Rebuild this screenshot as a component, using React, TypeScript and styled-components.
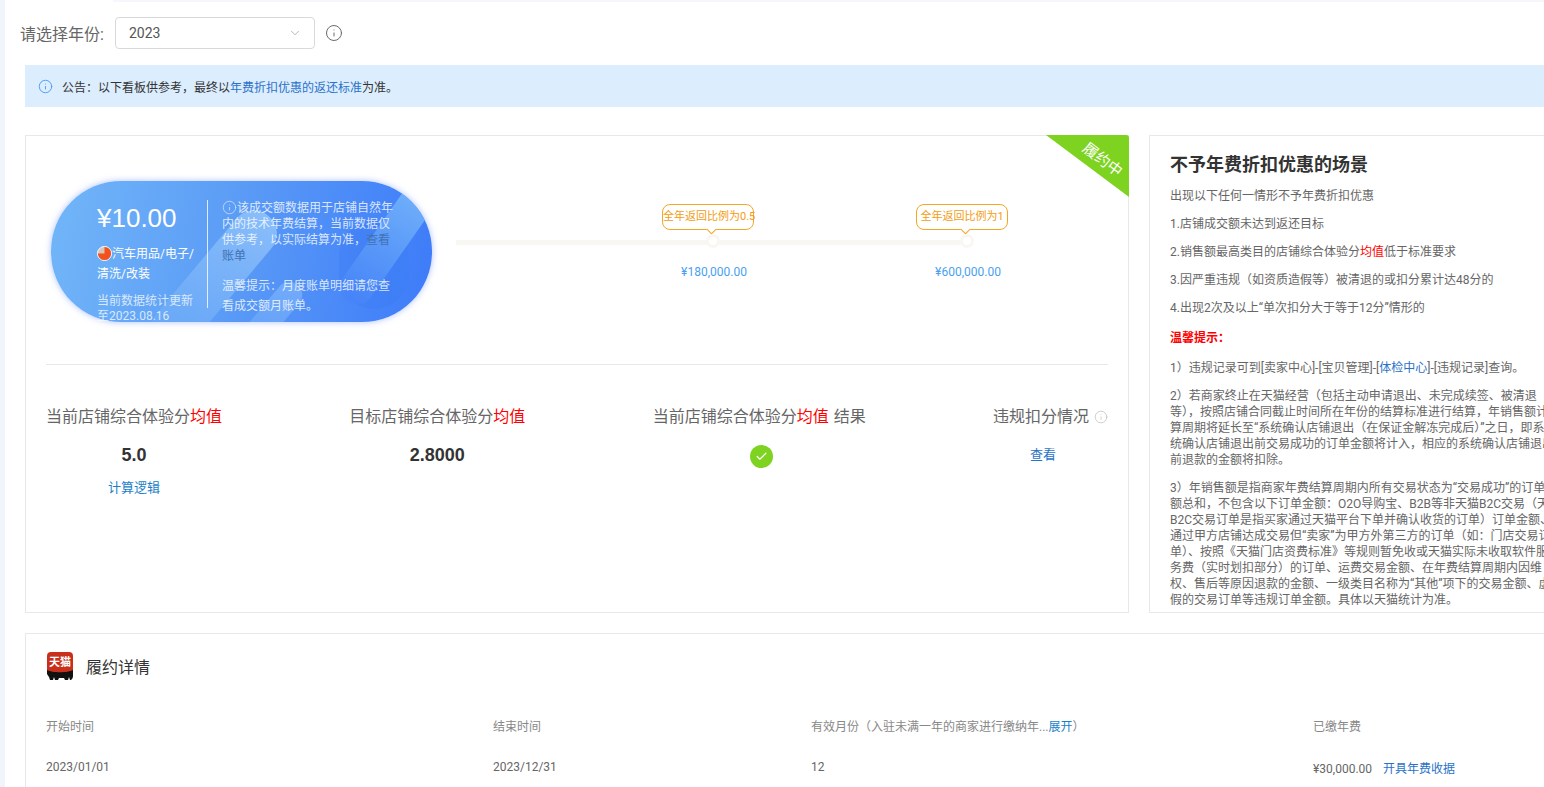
import React from 'react';
import styled, { createGlobalStyle } from 'styled-components';
import { ChevronDown, Info, Check } from 'lucide-react';

const GlobalStyle = createGlobalStyle`
  html, body {
    margin: 0;
    height: 787px;
    overflow: hidden;
    background: #fff;
    font-family: Roboto, "Liberation Sans", "Noto Sans CJK SC", sans-serif;
  }
  * { box-sizing: border-box; }
`;

const rules1 = [
  '若商家终止在天猫经营（包括主动申请退出、未完成续签、被清退',
  '等），按照店铺合同截止时间所在年份的结算标准进行结算，年销售额计',
  '算周期将延长至“系统确认店铺退出（在保证金解冻完成后）”之日，即系',
  '统确认店铺退出前交易成功的订单金额将计入，相应的系统确认店铺退出',
  '前退款的金额将扣除。',
];

const rules2 = [
  '年销售额是指商家年费结算周期内所有交易状态为“交易成功”的订单金',
  '额总和，不包含以下订单金额：O2O导购宝、B2B等非天猫B2C交易（天猫',
  'B2C交易订单是指买家通过天猫平台下单并确认收货的订单）订单金额、',
  '通过甲方店铺达成交易但“卖家”为甲方外第三方的订单（如：门店交易订',
  '单）、按照《天猫门店资费标准》等规则暂免收或天猫实际未收取软件服',
  '务费（实时划扣部分）的订单、运费交易金额、在年费结算周期内因维',
  '权、售后等原因退款的金额、一级类目名称为“其他”项下的交易金额、虚',
  '假的交易订单等违规订单金额。具体以天猫统计为准。',
];

const App = () => {
  return (
    <Shell>
      <GlobalStyle />
      <Rail />
      <Main>
        <TopStrip />
        <Toolbar>
          <ToolbarLabel>请选择年份:</ToolbarLabel>
          <YearSelect>
            2023
            <ChevronDown size={14} strokeWidth={1.2} color="#999" />
          </YearSelect>
          <Info size={18} strokeWidth={1.3} color="#666" />
        </Toolbar>
        <Notice>
          <Info size={15} strokeWidth={1.5} color="#4a9af5" />
          <span>
            公告：以下看板供参考，最终以<NoticeLink>年费折扣优惠的返还标准</NoticeLink>为准。
          </span>
        </Notice>
        <Columns>
          <StatusCard>
            <Ribbon />
            <RibbonText>履约中</RibbonText>
            <TopArea>
              <Pill>
                <PillDecor>
                  <Streak $left={140} $top={15} $w={46} $h={170} $rot={40} $from="rgba(165,210,252,.65)" $to="rgba(130,190,250,.1)" />
                  <Streak $left={195} $top={90} $w={26} $h={120} $rot={40} $from="rgba(165,210,252,.4)" $to="rgba(130,190,250,.05)" />
                  <Blob />
                  <Streak $left={325} $top={-25} $w={34} $h={160} $rot={35} $from="rgba(125,190,250,.95)" $to="rgba(70,130,250,.5)" />
                </PillDecor>
                <PillLeft>
                  <Amount>¥10.00</Amount>
                  <Category>
                    <svg width="15" height="15" viewBox="0 0 16 16" style={{ verticalAlign: '-3px' }}>
                      <circle cx="8" cy="8" r="7.5" fill="#d8c7b4" stroke="#fff" strokeWidth="1" />
                      <path d="M8 8V1a7 7 0 1 1-7 7z" fill="#f4511e" />
                    </svg>
                    汽车用品/电子/清洗/改装
                  </Category>
                  <UpdateNote>当前数据统计更新至2023.08.16</UpdateNote>
                </PillLeft>
                <PillDivider />
                <PillRight>
                  <PillNote>
                    <Info size={15} strokeWidth={1.2} color="#cfe2fb" style={{ verticalAlign: '-3px' }} />
                    该成交额数据用于店铺自然年内的技术年费结算，当前数据仅供参考，以实际结算为准，<DimLink>查看账单</DimLink>
                  </PillNote>
                  <PillTip>温馨提示：月度账单明细请您查看成交额月账单。</PillTip>
                </PillRight>
              </Pill>
              <Slider>
                <Track />
                <Milestone>
                  <Bubble>全年返回比例为0.5</Bubble>
                  <Dot />
                  <MilestoneAmount>¥180,000.00</MilestoneAmount>
                </Milestone>
                <Milestone>
                  <Bubble>全年返回比例为1</Bubble>
                  <Dot />
                  <MilestoneAmount>¥600,000.00</MilestoneAmount>
                </Milestone>
              </Slider>
            </TopArea>
            <Divider />
            <Stats>
              <Stat>
                <StatTitle>当前店铺综合体验分<Red>均值</Red></StatTitle>
                <StatValue>5.0</StatValue>
                <StatLink>计算逻辑</StatLink>
              </Stat>
              <Stat>
                <StatTitle>目标店铺综合体验分<Red>均值</Red></StatTitle>
                <StatValue>2.8000</StatValue>
              </Stat>
              <Stat>
                <StatTitle>当前店铺综合体验分<Red>均值</Red>结果</StatTitle>
                <CheckBadge>
                  <Check size={13} strokeWidth={2.2} color="#fff" />
                </CheckBadge>
              </Stat>
              <Stat>
                <StatTitle>
                  违规扣分情况
                  <Info size={14} strokeWidth={1.2} color="#bbb" />
                </StatTitle>
                <ViewLink>查看</ViewLink>
              </Stat>
            </Stats>
          </StatusCard>
          <RulesCard>
            <RulesTitle>不予年费折扣优惠的场景</RulesTitle>
            <RuleLine>出现以下任何一情形不予年费折扣优惠</RuleLine>
            <RuleLine>1.店铺成交额未达到返还目标</RuleLine>
            <RuleLine>2.销售额最高类目的店铺综合体验分<Red>均值</Red>低于标准要求</RuleLine>
            <RuleLine>3.因严重违规（如资质造假等）被清退的或扣分累计达48分的</RuleLine>
            <RuleLine>4.出现2次及以上“单次扣分大于等于12分”情形的</RuleLine>
            <RuleWarn>温馨提示：</RuleWarn>
            <RuleLine>1）违规记录可到[卖家中心]-[宝贝管理]-[<BlueText>体检中心</BlueText>]-[违规记录]查询。</RuleLine>
            <RuleBlock>
              {rules1.map((line, i) => (
                <div key={i}>{i === 0 ? `2）${line}` : line}</div>
              ))}
            </RuleBlock>
            <RuleBlock>
              {rules2.map((line, i) => (
                <div key={i}>{i === 0 ? `3）${line}` : line}</div>
              ))}
            </RuleBlock>
          </RulesCard>
        </Columns>
        <DetailCard>
          <DetailHead>
            <svg width="28" height="28" viewBox="0 0 28 28">
              <rect x="1" y="0" width="26" height="24" rx="4" fill="#c9301c" />
              <path d="M1 18c5 3 21 3 26 0v6c0 2-1 3-2 4h-1l-1-3-1 3h-3l-1-2-5 0-1 2H9l-1-3-1 3H4l-1-3c-1-1-2-3-2-4z" fill="#111" />
              <text x="14" y="14" textAnchor="middle" fontSize="11" fill="#fff" fontWeight="700">天猫</text>
            </svg>
            <DetailTitle>履约详情</DetailTitle>
          </DetailHead>
          <DetailGrid>
            <DetailLabel>开始时间</DetailLabel>
            <DetailLabel>结束时间</DetailLabel>
            <DetailLabel>
              有效月份（入驻未满一年的商家进行缴纳年...<ExpandLink>展开</ExpandLink>）
            </DetailLabel>
            <DetailLabel>已缴年费</DetailLabel>
            <DetailValue>2023/01/01</DetailValue>
            <DetailValue>2023/12/31</DetailValue>
            <DetailValue>12</DetailValue>
            <DetailValue>
              ¥30,000.00<ReceiptLink>开具年费收据</ReceiptLink>
            </DetailValue>
          </DetailGrid>
        </DetailCard>
      </Main>
    </Shell>
  );
};
export default App;

const Shell = styled.div`
  display: flex;
  width: 1544px;
  height: 787px;
  overflow: hidden;
`;

const Rail = styled.div`
  flex: none;
  width: 5px;
  background: #f2f4fb;
`;

const Main = styled.div`
  flex: none;
  width: 1600px;
  padding-left: 20px;
`;

const TopStrip = styled.div`
  height: 2px;
  margin-left: 88px;
  background: #f7f7fb;
`;

const Toolbar = styled.div`
  display: flex;
  align-items: center;
  height: 32px;
  margin: 15px 0 16px -5px;
  color: #666;
`;

const ToolbarLabel = styled.span`
  width: 95px;
  font-size: 16px;
`;

const YearSelect = styled.div`
  display: flex;
  align-items: center;
  justify-content: space-between;
  width: 200px;
  height: 32px;
  margin-right: 10px;
  padding: 0 12px 0 13px;
  border: 1px solid #d9d9d9;
  border-radius: 4px;
  font-size: 14px;
  color: #555;
`;

const Notice = styled.div`
  display: flex;
  align-items: center;
  gap: 9px;
  height: 42px;
  padding-left: 13px;
  background: #dcedfe;
  font-size: 12px;
  color: #333;
`;

const NoticeLink = styled.span`
  color: #2a72c8;
`;

const Columns = styled.div`
  display: flex;
  gap: 20px;
  margin-top: 28px;
`;

const StatusCard = styled.div`
  position: relative;
  flex: none;
  width: 1104px;
  height: 478px;
  border: 1px solid #e8e8e8;
`;

const Ribbon = styled.div`
  position: absolute;
  top: -1px;
  right: -1px;
  width: 83px;
  height: 62px;
  background: #7ed321;
  border-top-right-radius: 3px;
  clip-path: polygon(0 0, 100% 0, 100% 100%);
`;

const RibbonText = styled.span`
  position: absolute;
  top: 12px;
  right: 2px;
  font-size: 15px;
  color: #fff;
  transform: rotate(37deg);
`;

const TopArea = styled.div`
  display: flex;
  padding: 45px 0 0 25px;
`;

const Pill = styled.div`
  position: relative;
  flex: none;
  display: flex;
  width: 381px;
  height: 141px;
  padding: 19px 0 0 46px;
  border-radius: 70px;
  background: linear-gradient(100deg, #72b6f8 0%, #5c9df6 45%, #3d7bf9 100%);
  box-shadow: 0 0 6px rgba(90, 130, 255, 0.5);
  color: #fff;
`;

const PillDecor = styled.div`
  position: absolute;
  inset: 0;
  overflow: hidden;
  border-radius: 70px;
`;

const Streak = styled.div<{ $left: number; $top: number; $w: number; $h: number; $rot: number; $from: string; $to: string }>`
  position: absolute;
  left: ${(p) => p.$left}px;
  top: ${(p) => p.$top}px;
  width: ${(p) => p.$w}px;
  height: ${(p) => p.$h}px;
  border-radius: ${(p) => p.$w / 2}px;
  background: linear-gradient(${(p) => p.$from}, ${(p) => p.$to});
  transform: rotate(${(p) => p.$rot}deg);
`;

const Blob = styled.div`
  position: absolute;
  left: 288px;
  top: 40px;
  width: 70px;
  height: 88px;
  border-radius: 35px;
  background: rgba(60, 125, 245, 0.45);
`;

const PillLeft = styled.div`
  position: relative;
  flex: none;
  width: 102px;
`;

const Amount = styled.div`
  font-family: "Liberation Sans", sans-serif;
  font-size: 26px;
  line-height: 36px;
`;

const Category = styled.div`
  margin-top: 8px;
  font-size: 12px;
  line-height: 20px;
`;

const UpdateNote = styled.div`
  margin-top: 10px;
  font-size: 12px;
  line-height: 15px;
  color: rgba(255, 255, 255, 0.75);
  word-break: break-all;
`;

const PillDivider = styled.div`
  position: relative;
  flex: none;
  width: 1px;
  height: 108px;
  margin: 0 14px 0 8px;
  background: rgba(255, 255, 255, 0.8);
`;

const PillRight = styled.div`
  position: relative;
  flex: none;
  width: 175px;
  color: rgba(255, 255, 255, 0.8);
  font-size: 12px;
`;

const PillNote = styled.div`
  line-height: 16px;
`;

const DimLink = styled.span`
  color: #4272b4;
`;

const PillTip = styled.div`
  margin-top: 12px;
  line-height: 20px;
`;

const Slider = styled.div`
  position: relative;
  display: flex;
  width: 512px;
  height: 110px;
  margin: 23px 0 0 24px;
  padding-left: 3px;
`;

const Track = styled.div`
  position: absolute;
  left: 0;
  top: 36px;
  width: 512px;
  height: 5px;
  background: #f8f7f2;
`;

const Milestone = styled.div`
  position: relative;
  flex: none;
  display: flex;
  flex-direction: column;
  align-items: flex-end;
  width: 254px;
`;

const Bubble = styled.div`
  position: relative;
  width: 92px;
  height: 26px;
  margin-right: -41px;
  border: 1px solid #f5a623;
  border-radius: 8px;
  background: #fff;
  font-size: 11px;
  line-height: 24px;
  text-align: center;
  white-space: nowrap;
  color: #f39c12;

  &::after {
    content: '';
    position: absolute;
    left: 45px;
    bottom: -4px;
    width: 6px;
    height: 6px;
    border-right: 1px solid #f5a623;
    border-bottom: 1px solid #f5a623;
    background: #fff;
    transform: rotate(45deg);
  }
`;

const Dot = styled.div`
  position: relative;
  width: 14px;
  height: 14px;
  margin: 4px -7px 0 0;
  border: 3px solid #f8f7f2;
  border-radius: 50%;
  background: #fff;
`;

const MilestoneAmount = styled.div`
  width: 90px;
  margin: 16px -46px 0 0;
  font-size: 12px;
  line-height: 16px;
  text-align: center;
  white-space: nowrap;
  color: #4a9ff0;
`;

const Divider = styled.div`
  height: 1px;
  margin: 42px 20px 0;
  background: #e8e8e8;
`;

const Stats = styled.div`
  display: flex;
  justify-content: space-between;
  margin: 42px 20px 0;
`;

const Stat = styled.div`
  display: flex;
  flex-direction: column;
  align-items: center;
`;

const StatTitle = styled.div`
  display: flex;
  align-items: center;
  gap: 5px;
  font-size: 16px;
  line-height: 20px;
  white-space: pre;
  color: #666;
  & > span { margin-left: -5px; margin-right: -5px; }
  & > span:last-child { margin-right: 0; }
`;

const Red = styled.span`
  color: #f00;
`;

const StatValue = styled.div`
  margin-top: 18px;
  font-family: "Liberation Sans", sans-serif;
  font-size: 18px;
  font-weight: 700;
  line-height: 20px;
  color: #333;
`;

const StatLink = styled.div`
  margin-top: 13px;
  font-size: 13px;
  line-height: 20px;
  color: #1b7fc9;
`;

const CheckBadge = styled.div`
  display: flex;
  align-items: center;
  justify-content: center;
  width: 23px;
  height: 23px;
  margin: 18px 0 0 4px;
  border-radius: 50%;
  background: #7ed321;
`;

const ViewLink = styled.div`
  margin: 18px 0 0 -15px;
  font-size: 13px;
  line-height: 20px;
  color: #2a72c8;
`;

const RulesCard = styled.div`
  flex: none;
  width: 420px;
  height: 478px;
  padding: 17px 0 0 20px;
  overflow: hidden;
  border: 1px solid #e8e8e8;
  font-size: 12px;
  line-height: 16px;
  color: #666;
`;

const RulesTitle = styled.h2`
  margin: 0 0 11px;
  font-size: 18px;
  font-weight: 700;
  line-height: 24px;
  color: #333;
`;

const RuleLine = styled.div`
  margin-bottom: 12px;
  white-space: nowrap;
`;

const RuleWarn = styled.div`
  margin: 14px 0 14px;
  font-weight: 700;
  color: #f00;
`;

const BlueText = styled.span`
  color: #2a72c8;
`;

const RuleBlock = styled.div`
  margin-bottom: 12px;
  white-space: nowrap;
`;

const DetailCard = styled.div`
  height: 160px;
  margin-top: 20px;
  padding: 18px 0 0 20px;
  border: 1px solid #e8e8e8;
`;

const DetailHead = styled.div`
  display: flex;
  align-items: center;
  gap: 12px;
`;

const DetailTitle = styled.span`
  font-size: 16px;
  color: #333;
`;

const DetailGrid = styled.div`
  display: grid;
  grid-template-columns: 447px 318px 502px 300px;
  grid-auto-rows: 42px;
  align-items: center;
  margin-top: 24px;
  font-size: 12px;
`;

const DetailLabel = styled.div`
  white-space: nowrap;
  color: #888;
`;

const DetailValue = styled.div`
  white-space: nowrap;
  color: #666;
`;

const ExpandLink = styled.span`
  color: #1b7fc9;
`;

const ReceiptLink = styled.span`
  margin-left: 11px;
  color: #2a72c8;
`;
